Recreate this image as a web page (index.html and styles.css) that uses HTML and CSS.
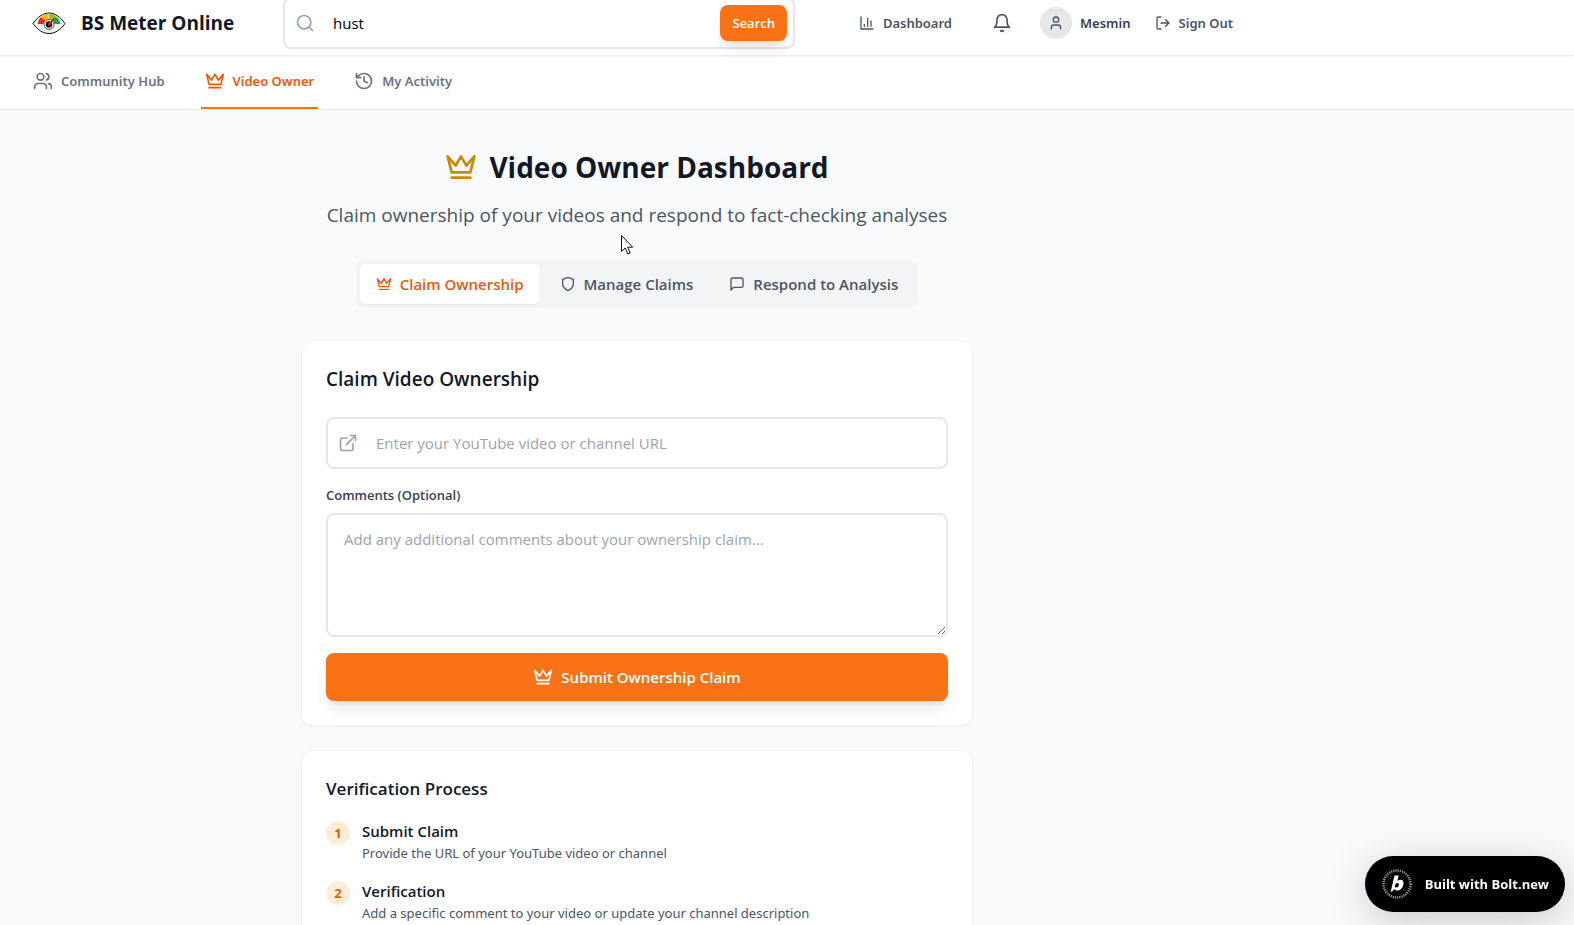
FILE: index.html
```html
<!DOCTYPE html>
<html lang="en">
<head>
    <meta charset="UTF-8">
    <meta name="viewport" content="width=device-width, initial-scale=1.0">
    <title>BS Meter Online - Video Owner Dashboard</title>
    <link rel="stylesheet" href="styles.css">
</head>
<body>
    <!-- shared icons -->
    <svg class="sprite" aria-hidden="true">
        <symbol id="crown" viewBox="0 0 24 24"><path d="m2 4 3 12h14l3-12-6 7-4-7-4 7-6-7zm3 16h14"/></symbol>
        <symbol id="search" viewBox="0 0 24 24"><circle cx="11" cy="11" r="8"/><path d="m21 21-4.3-4.3"/></symbol>
        <symbol id="chart" viewBox="0 0 24 24"><path d="M3 3v18h18M18 17V9M13 17V5M8 17v-3"/></symbol>
        <symbol id="bell" viewBox="0 0 24 24"><path d="M6 8a6 6 0 0 1 12 0c0 7 3 9 3 9H3s3-2 3-9M10.3 21a1.94 1.94 0 0 0 3.4 0"/></symbol>
        <symbol id="user" viewBox="0 0 24 24"><path d="M19 21v-2a4 4 0 0 0-4-4H9a4 4 0 0 0-4 4v2"/><circle cx="12" cy="7" r="4"/></symbol>
        <symbol id="logout" viewBox="0 0 24 24"><path d="M9 21H5a2 2 0 0 1-2-2V5a2 2 0 0 1 2-2h4M16 17l5-5-5-5M21 12H9"/></symbol>
        <symbol id="users" viewBox="0 0 24 24"><path d="M16 21v-2a4 4 0 0 0-4-4H6a4 4 0 0 0-4 4v2M22 21v-2a4 4 0 0 0-3-3.87M16 3.13a4 4 0 0 1 0 7.75"/><circle cx="9" cy="7" r="4"/></symbol>
        <symbol id="history" viewBox="0 0 24 24"><path d="M3 12a9 9 0 1 0 9-9 9.75 9.75 0 0 0-6.74 2.74L3 8M3 3v5h5M12 7v5l4 2"/></symbol>
        <symbol id="shield" viewBox="0 0 24 24"><path d="M12 22s8-4 8-10V5l-8-3-8 3v7c0 6 8 10 8 10"/></symbol>
        <symbol id="message" viewBox="0 0 24 24"><path d="M21 15a2 2 0 0 1-2 2H7l-4 4V5a2 2 0 0 1 2-2h14a2 2 0 0 1 2 2z"/></symbol>
        <symbol id="external" viewBox="0 0 24 24"><path d="M18 13v6a2 2 0 0 1-2 2H5a2 2 0 0 1-2-2V8a2 2 0 0 1 2-2h6M15 3h6v6M10 14 21 3"/></symbol>
    </svg>

    <header class="header">
        <div class="container header-row">
            <a class="brand" href="#">
                <svg class="brand-logo" viewBox="0 0 40 40">
                    <path d="M4 20.500C9 13.500 14.500 10 20 10S31 13.500 36 20.500C31 27.500 25.500 30.500 20 30.500S9 27.500 4 20.500z" fill="#f3f3f1" stroke="#111"/>
                    <path d="M8.500 21a12 12 0 0 1 3.500-7l4.500 3.500a6 6 0 0 0-2 3.500z" fill="#f0201c"/>
                    <path d="M12 14A13 13 0 0 1 19.700 10.500v5.200a6 6 0 0 0-3.500 2z" fill="#fbb90c"/>
                    <path d="M20.300 10.500A13 13 0 0 1 28 14l-4.500 3.500a6 6 0 0 0-3.200-1.800z" fill="#96be1e"/>
                    <path d="M28 14a12 12 0 0 1 3.500 7h-6a6 6 0 0 0-2-3.500z" fill="#22a455"/>
                    <circle cx="20" cy="21.500" r="5" fill="#eee" stroke="#555"/>
                    <circle cx="20" cy="21.500" r="3.200" fill="#111"/>
                    <path d="M20 21.500 26 15" stroke="#a3201c" stroke-width="1.200"/>
                    <circle cx="20.500" cy="21" r="1.500" fill="#e5231b"/>
                </svg>
                <span>BS Meter Online</span>
            </a>

            <form class="search">
                <svg class="icon icon-md"><use href="#search"/></svg>
                <input type="text" value="hust" aria-label="Search">
                <button type="submit">Search</button>
            </form>

            <div class="user-nav">
                <a class="user-link" href="#"><svg class="icon icon-sm"><use href="#chart"/></svg>Dashboard</a>
                <button class="bell" type="button" aria-label="Notifications"><svg class="icon icon-md"><use href="#bell"/></svg></button>
                <a class="user-link profile" href="#"><span class="avatar"><svg class="icon icon-sm"><use href="#user"/></svg></span>Mesmin</a>
                <button class="user-link" type="button"><svg class="icon icon-sm"><use href="#logout"/></svg>Sign Out</button>
            </div>
        </div>
    </header>

    <nav class="nav">
        <div class="container nav-row">
            <a class="nav-link" href="#"><svg class="icon icon-md"><use href="#users"/></svg>Community Hub</a>
            <a class="nav-link active" href="#"><svg class="icon icon-md"><use href="#crown"/></svg>Video Owner</a>
            <a class="nav-link" href="#"><svg class="icon icon-md"><use href="#history"/></svg>My Activity</a>
        </div>
    </nav>

    <main class="container">
        <div class="content">
            <h1><svg class="icon icon-lg"><use href="#crown"/></svg>Video Owner Dashboard</h1>
            <p class="subtitle">Claim ownership of your videos and respond to fact-checking analyses
                <svg class="cursor" viewBox="0 0 13 20"><path d="M.5.5v16l3.700-3.500 2.600 6 2.400-1-2.600-5.800h5.100z" fill="#fff" stroke="#111"/></svg>
            </p>

            <div class="tabs">
                <button class="tab active" type="button"><svg class="icon icon-sm"><use href="#crown"/></svg>Claim Ownership</button>
                <button class="tab" type="button"><svg class="icon icon-sm"><use href="#shield"/></svg>Manage Claims</button>
                <button class="tab" type="button"><svg class="icon icon-sm"><use href="#message"/></svg>Respond to Analysis</button>
            </div>

            <section class="card">
                <h2>Claim Video Ownership</h2>
                <form class="claim-form">
                    <div class="url-field">
                        <svg class="icon icon-md"><use href="#external"/></svg>
                        <input type="url" placeholder="Enter your YouTube video or channel URL" aria-label="Video or channel URL">
                    </div>
                    <label for="comments">Comments (Optional)</label>
                    <textarea id="comments" placeholder="Add any additional comments about your ownership claim..."></textarea>
                    <button class="submit" type="submit"><svg class="icon icon-md"><use href="#crown"/></svg>Submit Ownership Claim</button>
                </form>
            </section>

            <section class="card">
                <h3>Verification Process</h3>
                <ol class="steps">
                    <li>
                        <span class="step-number">1</span>
                        <div>
                            <h4>Submit Claim</h4>
                            <p>Provide the URL of your YouTube video or channel</p>
                        </div>
                    </li>
                    <li>
                        <span class="step-number">2</span>
                        <div>
                            <h4>Verification</h4>
                            <p>Add a specific comment to your video or update your channel description</p>
                        </div>
                    </li>
                </ol>
            </section>
        </div>
    </main>

    <a class="bolt-badge" href="#">
        <svg class="bolt-logo" viewBox="0 0 32 32">
            <circle cx="16" cy="16" r="13.500" fill="none" stroke="#999" stroke-width="2.500" stroke-dasharray="1.200 1"/>
            <path d="M13.500 7.500h4.200l-1.300 5.500c.9-.9 1.900-1.300 3-1.300 2.500 0 3.700 1.900 3 4.800-.8 3.700-3.100 6-5.900 6-1.300 0-2.200-.4-2.800-1.300l-4.100 3zm3 7.500c-1.300 0-2.200 1-2.600 2.400-.3 1.400.2 2.200 1.500 2.200s2.100-1 2.400-2.300c.3-1.400-.1-2.300-1.300-2.300z" fill="#fff" fill-rule="evenodd"/>
        </svg>
        Built with Bolt.new
    </a>
</body>
</html>
```
FILE: styles.css
```css
* {
    box-sizing: border-box;
    margin: 0;
    padding: 0;
}
html {
    height: 100%;
    overflow: hidden;
}
body {
    height: 100%;
    overflow: hidden;
    font-family: "Open Sans", "Noto Sans", sans-serif;
    font-size: 15px;
    line-height: 24px;
    background-color: #f9fafb;
    color: #111827;
}
a {
    color: inherit;
    text-decoration: none;
}
button, input, textarea {
    font: inherit;
    color: inherit;
}
button {
    border: none;
    background: none;
    cursor: pointer;
}
.sprite {
    display: none;
}
.icon {
    flex-shrink: 0;
    fill: none;
    stroke: currentColor;
    stroke-width: 2;
    stroke-linecap: round;
    stroke-linejoin: round;
}
.icon-sm {
    width: 16px;
    height: 16px;
}
.icon-md {
    width: 20px;
    height: 20px;
}
.icon-lg {
    width: 32px;
    height: 32px;
}
.container {
    max-width: 1274px;
    padding: 0 29px;
}

/* header */
.header {
    position: relative;
    z-index: 1;
    margin-top: -9px;
    background: white;
    box-shadow: 0 1px 2px rgba(0, 0, 0, 0.1);
}
.header-row {
    display: flex;
    align-items: center;
    height: 64px;
}
.brand {
    display: flex;
    align-items: center;
    flex: 0 0 254px;
    gap: 12px;
    font-size: 19px;
    font-weight: 700;
    white-space: nowrap;
}
.brand-logo {
    width: 40px;
    height: 40px;
}
.search {
    display: flex;
    align-items: center;
    flex: 0 1 512px;
    height: 52px;
    padding: 0 6px 0 10px;
    border: 2px solid #e5e7eb;
    border-radius: 8px;
}
.search .icon {
    color: #9ca3af;
}
.search input {
    flex: 1;
    min-width: 0;
    margin-left: 18px;
    border: none;
    outline: none;
    background: none;
    color: #000;
}
.search button {
    height: 36px;
    padding: 0 12px;
    border-radius: 8px;
    background: #f97316;
    color: white;
    font-size: 13px;
    font-weight: 600;
    box-shadow: 0 10px 15px -3px rgba(0, 0, 0, 0.1), 0 4px 6px -4px rgba(0, 0, 0, 0.1);
}
.user-nav {
    display: flex;
    align-items: center;
    margin-left: auto;
    color: #4b5563;
}
.user-link {
    display: flex;
    align-items: center;
    gap: 8px;
    padding: 0 12px;
    font-family: "Noto Sans", sans-serif;
    font-size: 13px;
    font-weight: 600;
    white-space: nowrap;
}
.bell {
    display: flex;
    margin: 0 16px 0 28px;
}
.avatar {
    display: flex;
    align-items: center;
    justify-content: center;
    width: 32px;
    height: 32px;
    border-radius: 50%;
    background: #e5e7eb;
}
.profile {
    color: #374151;
}
.avatar .icon {
    color: #4b5563;
}

/* section navigation */
.nav {
    background: white;
    border-bottom: 1px solid #e5e7eb;
}
.nav-row {
    display: flex;
    gap: 32px;
}
.nav-link {
    display: flex;
    align-items: center;
    gap: 8px;
    padding: 16px 4px;
    border-bottom: 2px solid transparent;
    color: #6b7280;
    font-family: "Noto Sans", sans-serif;
    font-size: 13px;
    font-weight: 600;
    line-height: 20px;
}
.nav-link.active {
    color: #ea580c;
    border-color: #f97316;
}

/* page content */
.content {
    max-width: 672px;
    margin: 0 auto;
    padding-top: 39px;
}
h1 {
    display: flex;
    align-items: center;
    justify-content: center;
    gap: 12px;
    margin-bottom: 16px;
    font-size: 28px;
    line-height: 36px;
    font-weight: 700;
}
h1 .icon {
    color: #ca8a04;
}
.subtitle {
    position: relative;
    margin-bottom: 31px;
    color: #4b5563;
    font-size: 19px;
    line-height: 28px;
    text-align: center;
}
.cursor {
    position: absolute;
    top: 34px;
    left: 320px;
    width: 13px;
    height: 20px;
}
.tabs {
    display: flex;
    gap: 4px;
    width: fit-content;
    margin: 0 auto 32px;
    padding: 4px;
    border-radius: 8px;
    background: #f3f4f6;
}
.tab {
    display: flex;
    align-items: center;
    gap: 8px;
    padding: 8px 16px;
    border-radius: 6px;
    color: #4b5563;
    font-weight: 600;
}
.tab.active {
    background: white;
    color: #ea580c;
    box-shadow: 0 1px 2px rgba(0, 0, 0, 0.05);
}
.card {
    margin-bottom: 24px;
    padding: 24px;
    border: 1px solid #f3f4f6;
    border-radius: 12px;
    background: white;
    box-shadow: 0 1px 2px rgba(0, 0, 0, 0.05);
}
h2 {
    margin-bottom: 24px;
    font-size: 19px;
    line-height: 28px;
    font-weight: 600;
}
.claim-form {
    display: flex;
    flex-direction: column;
}
.url-field {
    display: flex;
    align-items: center;
    height: 52px;
    padding: 0 10px;
    border: 2px solid #e5e7eb;
    border-radius: 8px;
    color: #9ca3af;
}
.url-field input {
    flex: 1;
    margin-left: 18px;
    border: none;
    outline: none;
}
.claim-form label {
    margin: 16px 0 8px;
    color: #374151;
    font-size: 13px;
    line-height: 20px;
    font-weight: 600;
}
textarea {
    height: 124px;
    padding: 12px 16px;
    border: 2px solid #e5e7eb;
    border-radius: 8px;
    resize: vertical;
}
::placeholder {
    color: #9ca3af;
}
.submit {
    display: flex;
    align-items: center;
    justify-content: center;
    gap: 8px;
    height: 48px;
    margin-top: 16px;
    border-radius: 8px;
    background: #f97316;
    color: white;
    font-weight: 600;
    box-shadow: 0 10px 15px -3px rgba(0, 0, 0, 0.1), 0 4px 6px -4px rgba(0, 0, 0, 0.1);
}
h3 {
    margin-bottom: 16px;
    font-size: 17px;
    line-height: 28px;
    font-weight: 600;
}
.steps {
    display: grid;
    gap: 16px;
    list-style: none;
}
.steps li {
    display: flex;
    gap: 12px;
}
.step-number {
    width: 24px;
    height: 24px;
    margin-top: 2px;
    border-radius: 50%;
    background: #ffedd5;
    color: #ea580c;
    font-size: 13px;
    font-weight: 700;
    text-align: center;
}
h4 {
    font-size: 15px;
    font-weight: 600;
}
.steps p {
    color: #4b5563;
    font-family: "Noto Sans", sans-serif;
    font-size: 13px;
    line-height: 20px;
}

/* floating badge */
.bolt-badge {
    position: fixed;
    right: 9px;
    bottom: 13px;
    display: flex;
    align-items: center;
    gap: 12px;
    height: 56px;
    padding: 0 16px;
    border-radius: 28px;
    background: black;
    color: white;
    font-size: 13px;
    font-weight: 700;
    white-space: nowrap;
    box-shadow: 0 8px 40px rgba(0, 0, 0, 0.2);
}
.bolt-logo {
    width: 32px;
    height: 32px;
}
```
